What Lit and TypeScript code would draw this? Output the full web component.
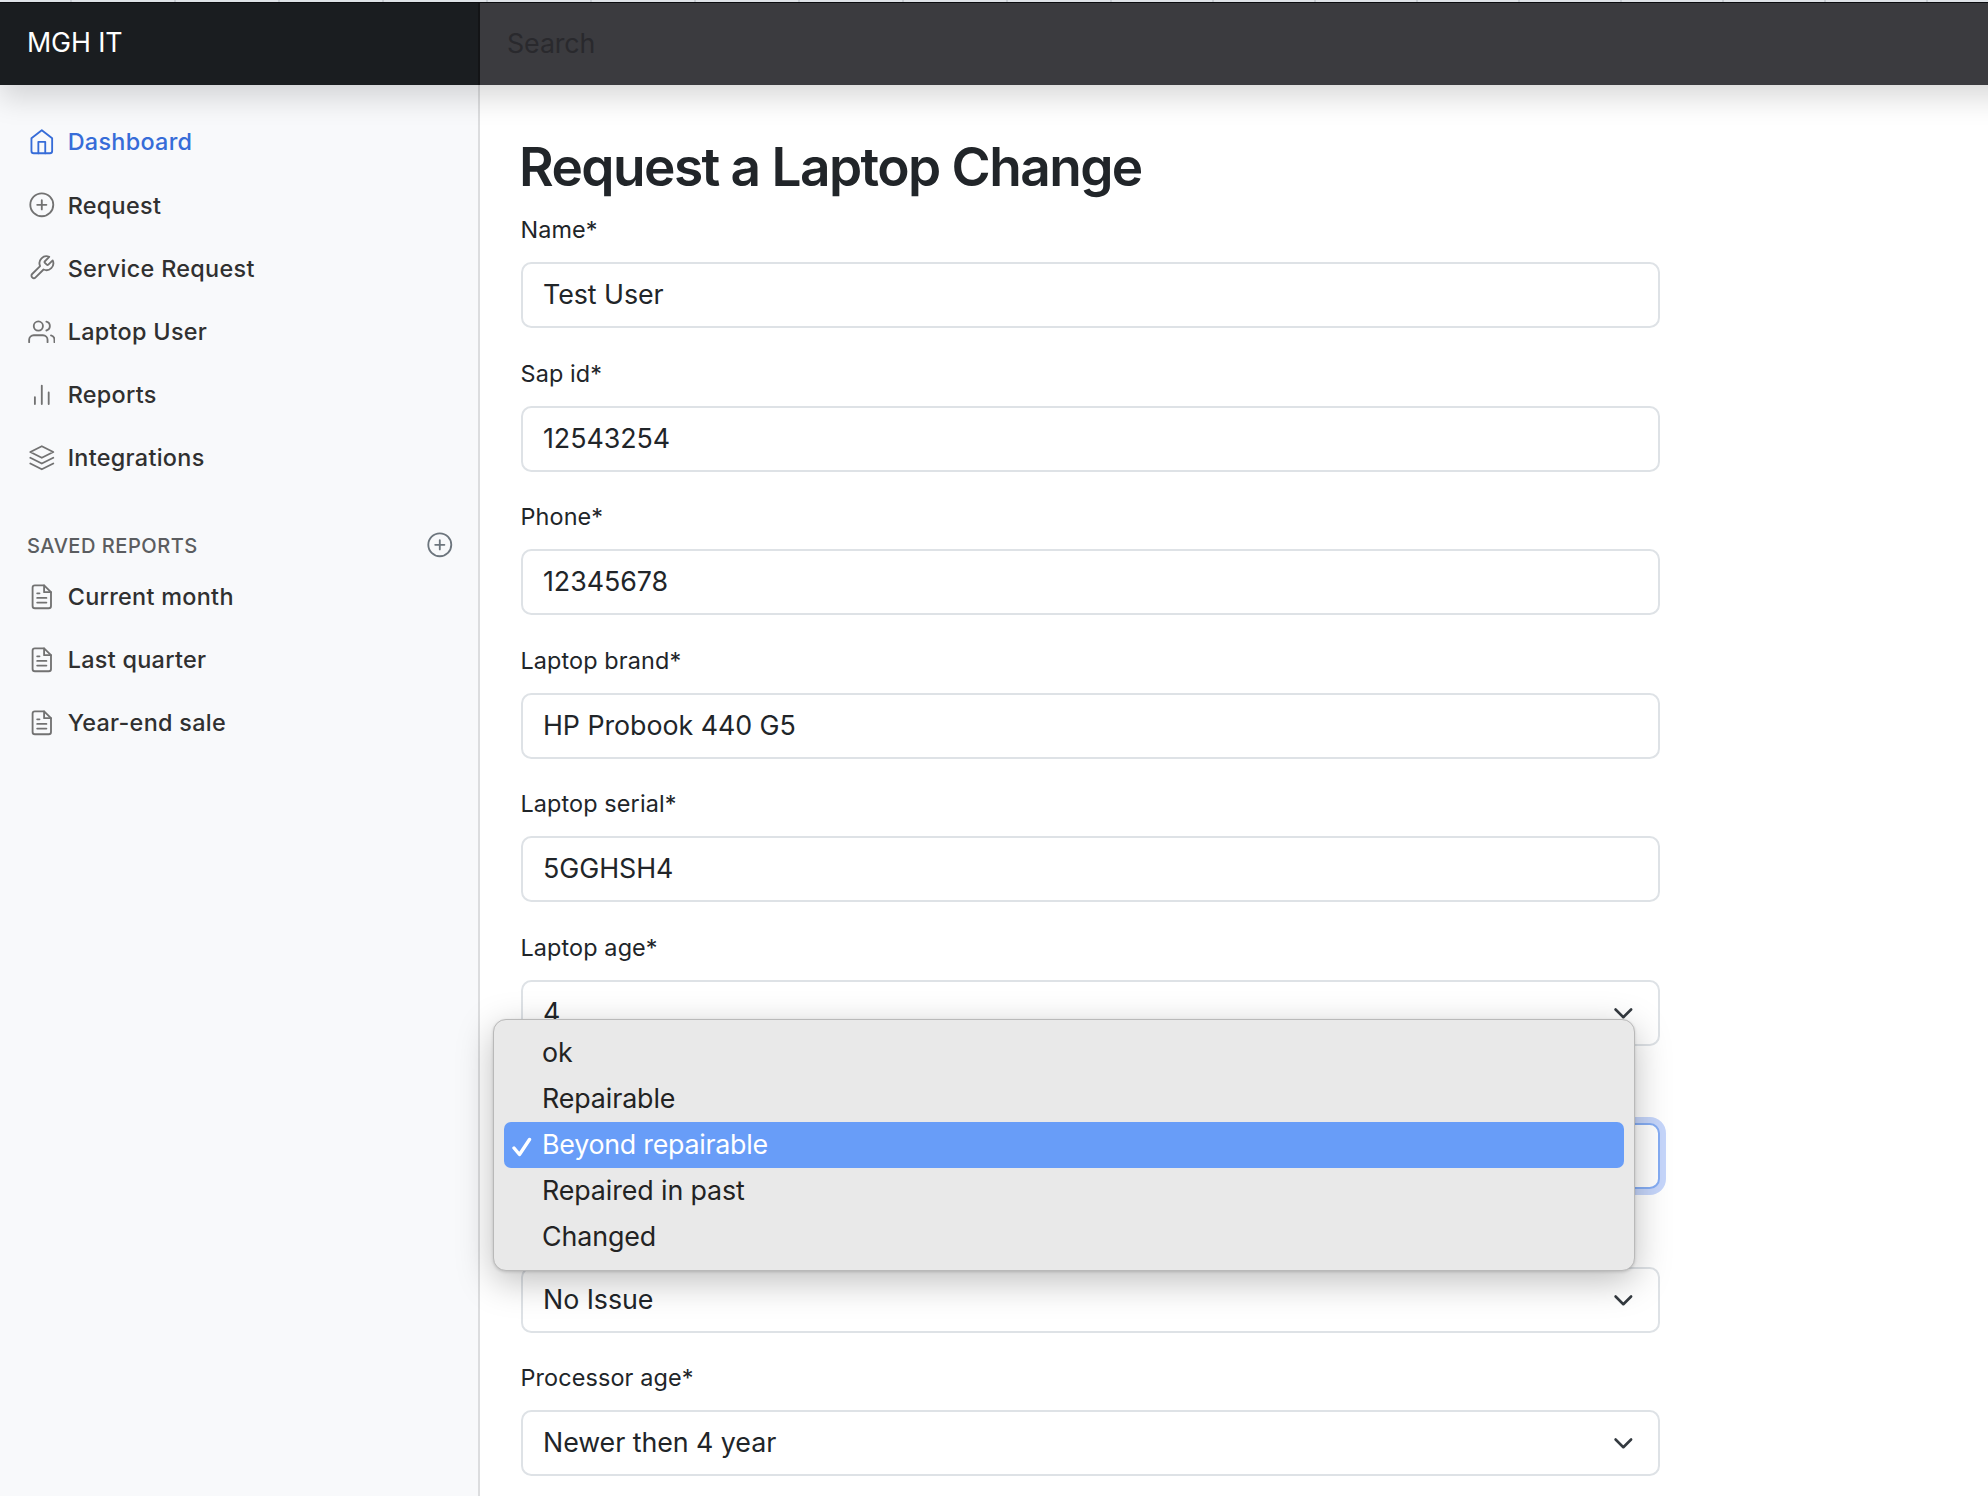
import { LitElement, html, css, svg } from "lit";
import { classMap } from "lit/directives/class-map.js";

const icons = {
  home: svg`<path d="M3 9l9-7 9 7v11a2 2 0 0 1-2 2H5a2 2 0 0 1-2-2z"/><path d="M9 22V12h6v10"/>`,
  plus: svg`<circle cx="12" cy="12" r="10"/><path d="M12 8v8M8 12h8"/>`,
  tool: svg`<path d="M14.7 6.3a1 1 0 0 0 0 1.4l1.6 1.6a1 1 0 0 0 1.4 0l3.77-3.77a6 6 0 0 1-7.94 7.94l-6.91 6.91a2.12 2.12 0 0 1-3-3l6.91-6.91a6 6 0 0 1 7.94-7.94l-3.76 3.76z"/>`,
  users: svg`<path d="M17 21v-2a4 4 0 0 0-4-4H5a4 4 0 0 0-4 4v2"/><circle cx="9" cy="7" r="4"/><path d="M23 21v-2a4 4 0 0 0-3-3.87M16 3.13a4 4 0 0 1 0 7.75"/>`,
  bars: svg`<path d="M18 20V10M12 20V4M6 20v-6"/>`,
  layers: svg`<path d="M12 2L2 7l10 5 10-5-10-5z"/><path d="M2 17l10 5 10-5"/><path d="M2 12l10 5 10-5"/>`,
  file: svg`<path d="M14 2H6a2 2 0 0 0-2 2v16a2 2 0 0 0 2 2h12a2 2 0 0 0 2-2V8z"/><path d="M14 2v6h6M16 13H8M16 17H8M10 9H8"/>`,
};

type IconName = keyof typeof icons;

const navItems: { label: string; icon: IconName; active?: boolean }[] = [
  { label: "Dashboard", icon: "home", active: true },
  { label: "Request", icon: "plus" },
  { label: "Service Request", icon: "tool" },
  { label: "Laptop User", icon: "users" },
  { label: "Reports", icon: "bars" },
  { label: "Integrations", icon: "layers" },
];

const savedReports = ["Current month", "Last quarter", "Year-end sale"];

interface Field {
  label: string;
  value: string;
  select?: boolean;
  open?: boolean;
}

const fields: Field[] = [
  { label: "Name*", value: "Test User" },
  { label: "Sap id*", value: "12543254" },
  { label: "Phone*", value: "12345678" },
  { label: "Laptop brand*", value: "HP Probook 440 G5" },
  { label: "Laptop serial*", value: "5GGHSH4" },
  { label: "Laptop age*", value: "4", select: true },
  { label: "", value: "", select: true, open: true },
  { label: "", value: "No Issue", select: true },
  { label: "Processor age*", value: "Newer then 4 year", select: true },
];

const options = ["ok", "Repairable", "Beyond repairable", "Repaired in past", "Changed"];
const selected = "Beyond repairable";

class AppRoot extends LitElement {
  static styles = css`
    :host {
      display: flex;
      flex-direction: column;
      height: 1496px;
      overflow: hidden;
      background: #fff;
      color: #212529;
      font-family: Inter, "Liberation Sans", sans-serif;
      font-size: 26.8px;
    }
    * { box-sizing: border-box; }
    .tabs { display: flex; flex: none; height: 2px; }
    .tabs-left {
      width: 1112px;
      background: repeating-linear-gradient(90deg, #e3e7ec 0 102px, #cdd2d8 102px 104px) -32px 0;
      background-size: 104px 2px;
    }
    .tabs-right {
      flex: 1;
      background: repeating-linear-gradient(90deg, #e3e7ec 0 100px, #cdd2d8 100px 102px) 0 0;
      background-size: 102px 2px;
    }
    header {
      display: flex;
      flex: none;
      height: 83px;
      margin-right: -40px;
      border-top: 1px solid #0b0c0f;
      position: relative;
      z-index: 1;
      box-shadow: 0 13.8px 27.6px rgba(0, 0, 0, 0.15);
    }
    .brand {
      width: 480px;
      padding: 0 27px;
      line-height: 79px;
      background: #1a1d20;
      border-right: 2px solid #131416;
      color: #fff;
      letter-spacing: -0.1px;
    }
    .search {
      flex: 1;
      padding-left: 27px;
      line-height: 81px;
      background: #3b3b3f;
      color: #29292d;
      letter-spacing: -0.1px;
    }
    .body { display: flex; flex: 1; min-height: 0; }
    nav {
      width: 480px;
      flex: none;
      padding-top: 25.4px;
      background: #f8f9fb;
      border-right: 2px solid #dcdddf;
    }
    .link {
      display: flex;
      align-items: center;
      gap: 12.4px;
      height: 63.15px;
      padding-left: 27.7px;
      color: #303030;
      font-size: 23.4px;
      font-weight: 540;
      letter-spacing: 0.3px;
    }
    .icon {
      width: 27.6px;
      height: 27.6px;
      flex: none;
      fill: none;
      stroke: #727272;
      stroke-width: 1.6;
      stroke-linecap: round;
      stroke-linejoin: round;
    }
    .active { color: #366cd8; }
    .active .icon { stroke: #366cd8; }
    .heading {
      display: flex;
      align-items: center;
      justify-content: space-between;
      height: 41px;
      margin-top: 34.6px;
      padding: 0 24.5px 0 27px;
      color: #5b5d60;
      font-size: 20.1px;
      font-weight: 500;
      letter-spacing: 0.48px;
    }
    .heading span { padding-top: 4px; }
    .heading .icon { stroke: #6c757d; }
    main { width: 1180px; padding: 50px 0 0 41px; position: relative; }
    h2 {
      margin: 0;
      height: 76px;
      line-height: 64px;
      font-size: 53.2px;
      font-weight: 560;
      letter-spacing: -1.56px;
      text-indent: -2px;
      white-space: nowrap;
    }
    .field { height: 143.5px; }
    label {
      display: block;
      height: 51px;
      line-height: 37px;
      font-size: 23.4px;
      letter-spacing: 0.12px;
      text-indent: -0.5px;
    }
    .control {
      display: flex;
      align-items: center;
      justify-content: space-between;
      height: 66px;
      padding: 0 24.5px 1px 20px;
      border: 2px solid #dee2e6;
      border-radius: 10.3px;
      background: #fff;
    }
    .value { letter-spacing: -0.05px; padding-bottom: 1px; }
    .focused {
      border-color: #86aef5;
      box-shadow: 0 0 0 6px #c6d6fb;
    }
    .chevron {
      width: 20.7px;
      height: 20.7px;
      margin-top: 2px;
      fill: none;
      stroke: #343a40;
      stroke-width: 2;
      stroke-linecap: round;
      stroke-linejoin: round;
    }
    .menu {
      position: absolute;
      left: 13px;
      top: 934px;
      width: 1142px;
      height: 252px;
      padding: 10px 10px;
      border: 1px solid #b9b9b9;
      border-radius: 13px;
      background: #e9e9e9;
      box-shadow: 0 10px 36px rgba(0, 0, 0, 0.26), 0 1px 3px rgba(0, 0, 0, 0.15);
    }
    .option {
      display: flex;
      align-items: center;
      height: 46px;
      padding: 0 0 1px 8px;
      border-radius: 7px;
      color: #232323;
      letter-spacing: -0.1px;
    }
    .option span { padding-bottom: 2px; }
    .selected { background: #689df8; color: #fff; font-weight: 440; letter-spacing: -0.25px; }
    .tick {
      width: 30px;
      height: 24px;
      flex: none;
      fill: none;
      stroke: #fff;
      stroke-width: 3.4;
      stroke-linecap: round;
      stroke-linejoin: round;
    }
  `;

  private icon(name: IconName) {
    return html`<svg class="icon" viewBox="0 0 24 24">${icons[name]}</svg>`;
  }

  private link(label: string, name: IconName, active = false) {
    return html`<div class=${classMap({ link: true, active })}>${this.icon(name)}<span>${label}</span></div>`;
  }

  private field(f: Field) {
    return html`<div class="field">
      <label>${f.label}</label>
      <div class=${classMap({ control: true, focused: !!f.open })}>
        <span class="value">${f.value}</span>
        ${f.select && !f.open
          ? html`<svg class="chevron" viewBox="0 0 16 16"><path d="m2 5 6 6 6-6" /></svg>`
          : ""}
      </div>
    </div>`;
  }

  render() {
    return html`
      <div class="tabs"><div class="tabs-left"></div><div class="tabs-right"></div></div>
      <header>
        <div class="brand">MGH IT</div>
        <div class="search">Search</div>
      </header>
      <div class="body">
        <nav>
          ${navItems.map((n) => this.link(n.label, n.icon, n.active))}
          <div class="heading"><span>SAVED REPORTS</span>${this.icon("plus")}</div>
          ${savedReports.map((r) => this.link(r, "file"))}
        </nav>
        <main>
          <h2>Request a Laptop Change</h2>
          ${fields.map((f) => this.field(f))}
          <div class="menu">
            ${options.map(
              (o) => html`<div class=${classMap({ option: true, selected: o === selected })}>
                <svg class="tick" viewBox="0 0 30 24">
                  ${o === selected ? svg`<path d="M2 15l5.5 6.5L17.5 6.5" />` : ""}
                </svg>
                <span>${o}</span>
              </div>`
            )}
          </div>
        </main>
      </div>
    `;
  }
}
customElements.define("app-root", AppRoot);
